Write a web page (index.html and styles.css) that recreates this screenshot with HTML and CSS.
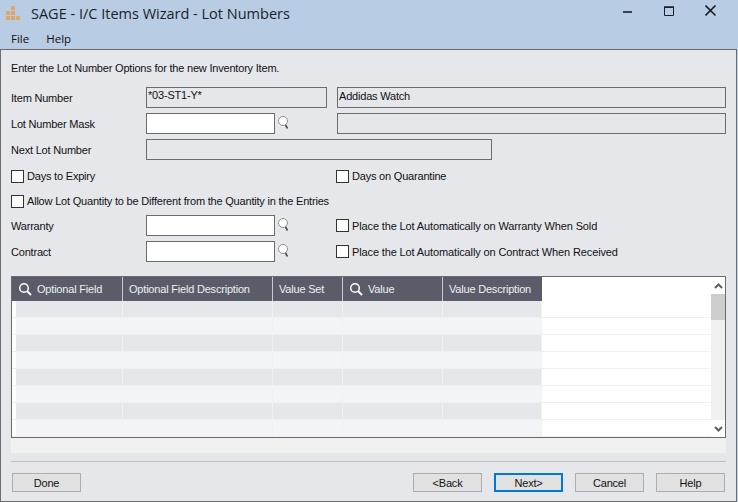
FILE: index.html
```html
<!DOCTYPE html>
<html lang="en">

<head>
    <meta charset="UTF-8">
    <title>SAGE - I/C Items Wizard - Lot Numbers</title>
    <link rel="stylesheet" href="styles.css">
</head>

<body>
    <div class="titulo">
        <svg class="logo" width="15" height="15" viewBox="0 0 15 15">
            <rect x="5" y="1" width="4" height="4" fill="#dfa96c" />
            <rect x="0" y="6" width="4" height="4" fill="#dfa96c" />
            <rect x="5" y="6" width="4" height="4" fill="#dca566" />
            <rect x="0" y="11" width="4" height="4" fill="#dca566" />
            <rect x="5" y="11" width="4" height="4" fill="#dca566" />
            <rect x="10" y="11" width="4" height="4" fill="#dfa96c" />
        </svg>
        <span class="titulo-texto">SAGE - I/C Items Wizard - Lot Numbers</span>
        <div class="controles">
            <svg width="12" height="12" viewBox="0 0 12 12"><path d="M-1 7h10" stroke="#1a1f28" stroke-width="1.600" /></svg>
            <svg width="12" height="12" viewBox="0 0 12 12"><path d="M.5 2.500v8h9v-8z" fill="none" stroke="#1a1f28" /><path d="M0 2h10" stroke="#1a1f28" stroke-width="1.500" /></svg>
            <svg width="12" height="12" viewBox="0 0 12 12"><path d="M.5 .5l10 10M10.500 .5l-10 10" stroke="#1a1f28" stroke-width="1.600" /></svg>
        </div>
    </div>

    <div class="menu">
        <span>File</span>
        <span>Help</span>
    </div>

    <div class="janela">
        <p class="instrucao">Enter the Lot Number Options for the new Inventory Item.</p>

        <div class="linha">
            <label class="rotulo">Item Number</label>
            <div class="campo leitura curto">*03-ST1-Y*</div>
            <div class="campo leitura longo">Addidas Watch</div>
        </div>

        <div class="linha">
            <label class="rotulo">Lot Number Mask</label>
            <div class="campo branco"></div>
            <svg class="lupa" width="14" height="16" viewBox="0 0 14 16"><circle cx="6" cy="7" r="4.500" fill="#fff" stroke="#8f8f8f" /><path d="M8.500 11l2 3.500" stroke="#4a4a4a" stroke-width="1.600" /></svg>
            <div class="campo leitura longo recuo"></div>
        </div>

        <div class="linha">
            <label class="rotulo">Next Lot Number</label>
            <div class="campo leitura medio"></div>
        </div>

        <div class="linha-check primeira">
            <label class="check coluna-esq"><i></i>Days to Expiry</label>
            <label class="check"><i></i>Days on Quarantine</label>
        </div>

        <div class="linha-check segunda">
            <label class="check"><i></i>Allow Lot Quantity to be Different from the Quantity in the Entries</label>
        </div>

        <div class="linha terceira">
            <label class="rotulo">Warranty</label>
            <div class="campo branco"></div>
            <svg class="lupa" width="14" height="16" viewBox="0 0 14 16"><circle cx="6" cy="7" r="4.500" fill="#fff" stroke="#8f8f8f" /><path d="M8.500 11l2 3.500" stroke="#4a4a4a" stroke-width="1.600" /></svg>
            <label class="check"><i></i>Place the Lot Automatically on Warranty When Sold</label>
        </div>

        <div class="linha">
            <label class="rotulo">Contract</label>
            <div class="campo branco"></div>
            <svg class="lupa" width="14" height="16" viewBox="0 0 14 16"><circle cx="6" cy="7" r="4.500" fill="#fff" stroke="#8f8f8f" /><path d="M8.500 11l2 3.500" stroke="#4a4a4a" stroke-width="1.600" /></svg>
            <label class="check"><i></i>Place the Lot Automatically on Contract When Received</label>
        </div>

        <div class="tabela">
            <div class="tabela-corpo">
                <div class="cabecalho">
                    <div class="col col1">
                        <svg width="14" height="14" viewBox="0 0 14 14"><circle cx="6" cy="6" r="4.300" fill="none" stroke="#fff" stroke-width="1.500" /><path d="M9 9l4 4" stroke="#fff" stroke-width="2" /></svg>
                        Optional Field
                    </div>
                    <div class="col col2">Optional Field Description</div>
                    <div class="col col3">Value Set</div>
                    <div class="col col4">
                        <svg width="14" height="14" viewBox="0 0 14 14"><circle cx="6" cy="6" r="4.300" fill="none" stroke="#fff" stroke-width="1.500" /><path d="M9 9l4 4" stroke="#fff" stroke-width="2" /></svg>
                        Value
                    </div>
                    <div class="col col5">Value Description</div>
                </div>
                <div class="registro escuro"><div class="col1"></div><div class="col2"></div><div class="col3"></div><div class="col4"></div><div class="col5"></div></div>
                <div class="registro"><div class="col1"></div><div class="col2"></div><div class="col3"></div><div class="col4"></div><div class="col5"></div></div>
                <div class="registro escuro"><div class="col1"></div><div class="col2"></div><div class="col3"></div><div class="col4"></div><div class="col5"></div></div>
                <div class="registro"><div class="col1"></div><div class="col2"></div><div class="col3"></div><div class="col4"></div><div class="col5"></div></div>
                <div class="registro escuro"><div class="col1"></div><div class="col2"></div><div class="col3"></div><div class="col4"></div><div class="col5"></div></div>
                <div class="registro"><div class="col1"></div><div class="col2"></div><div class="col3"></div><div class="col4"></div><div class="col5"></div></div>
                <div class="registro escuro"><div class="col1"></div><div class="col2"></div><div class="col3"></div><div class="col4"></div><div class="col5"></div></div>
                <div class="registro"><div class="col1"></div><div class="col2"></div><div class="col3"></div><div class="col4"></div><div class="col5"></div></div>
            </div>
            <div class="rolagem">
                <svg width="14" height="17" viewBox="0 0 14 17"><path d="M4 11l3.500-3.500L11 11" fill="none" stroke="#606060" stroke-width="2" /></svg>
                <div class="polegar"></div>
                <div class="trilho"></div>
                <svg width="14" height="17" viewBox="0 0 14 17"><path d="M4 7l3.500 3.500L11 7" fill="none" stroke="#606060" stroke-width="2" /></svg>
            </div>
        </div>
        <div class="faixa"></div>
        <hr class="separador">

        <div class="botoes">
            <button>Done</button>
            <div class="botoes-dir">
                <button>&lt;Back</button>
                <button class="ativo">Next&gt;</button>
                <button>Cancel</button>
                <button>Help</button>
            </div>
        </div>
    </div>
</body>

</html>
```

FILE: styles.css
```css
html, body {
    margin: 0;
    height: 502px;
    overflow: hidden;
}

body {
    width: 738px;
    background: #b8cce4;
    font-family: "Liberation Sans", sans-serif;
    font-size: 11px;
    letter-spacing: -0.2px;
    color: #111;
}

.titulo {
    height: 28px;
    display: flex;
    align-items: center;
    padding-left: 6px;
    letter-spacing: normal;
}

.logo {
    align-self: flex-start;
    margin: 5px 10px 0 0;
}

.titulo-texto {
    font-family: "Open Sans", sans-serif;
    font-size: 14.500px;
    color: #1a1f28;
    padding-bottom: 2px;
}

.controles {
    align-self: flex-start;
    display: flex;
    gap: 29px;
    margin: 5px 21px 0 auto;
}

.menu {
    height: 21px;
    display: flex;
    gap: 17px;
    padding-left: 11px;
    font-family: "Open Sans", sans-serif;
    font-size: 11.500px;
    letter-spacing: normal;
    line-height: 21px;
}

.janela {
    width: 737px;
    height: 453px;
    box-sizing: border-box;
    background: #e6e7eb;
    border: 1px solid #6d6d6d;
    padding: 0 10px;
}

.instrucao {
    margin: 0;
    height: 37px;
    padding-top: 12px;
    box-sizing: border-box;
}

.linha {
    display: flex;
    align-items: center;
    height: 21px;
    margin-bottom: 5px;
}

.linha .check {
    letter-spacing: -0.13px;
}

.rotulo {
    width: 135px;
    flex: none;
    padding-top: 1px;
}

.campo {
    height: 21px;
    box-sizing: border-box;
    border: 1px solid #6b6b6b;
    padding: 2px 1px;
    flex: none;
}

.leitura {
    background: #e6e7eb;
}

.branco {
    width: 129px;
    background: #fff;
}

.curto {
    width: 181px;
    margin-right: 10px;
    padding-top: 1px;
}

.longo {
    width: 389px;
}

.recuo {
    margin-left: 1px;
}

.medio {
    width: 346px;
}

.lupa {
    flex: none;
    margin: 0 45px 3px 2px;
}

.check {
    display: flex;
    align-items: center;
}

.check i {
    width: 11px;
    height: 11px;
    border: 1px solid #333;
    background: #fff;
    margin-right: 3px;
    flex: none;
}

.linha-check {
    display: flex;
    height: 14px;
}

.primeira {
    margin-top: 9px;
}

.segunda {
    margin-top: 11px;
}

.terceira {
    margin-top: 7px;
}

.coluna-esq {
    width: 325px;
    flex: none;
}

.tabela {
    display: flex;
    height: 162px;
    width: 715px;
    box-sizing: border-box;
    margin-top: 14px;
    border: 1px solid #6b6b6b;
    background: #fff;
}

.tabela-corpo {
    flex: 1;
    overflow: hidden;
}

.cabecalho,
.registro {
    display: flex;
}

.cabecalho {
    height: 24px;
    width: 530px;
    background: #5a5d69;
    color: #eef0f4;
    white-space: nowrap;
}

.col {
    display: flex;
    align-items: center;
    gap: 5px;
    padding-left: 6px;
    box-sizing: border-box;
    border-right: 1px solid #c9cbd1;
}

.col1 { width: 111px; }
.col2 { width: 150px; }
.col3 { width: 70px; }
.col4 { width: 100px; }
.col5 { width: 99px; border-right: 0; }

.registro {
    height: 17px;
    box-sizing: border-box;
    border-bottom: 1px solid #f0f0f0;
    padding-left: 4px;
}

.registro > div {
    box-sizing: border-box;
    border-right: 1px solid #f0f1f3;
    background: #f3f4f8;
}

.registro > .col1 { width: 107px; }

.registro.escuro > div {
    background: #e6e7ea;
}

.rolagem {
    width: 14px;
    flex: none;
    display: flex;
    flex-direction: column;
    background: #f0f0f0;
}

.rolagem svg {
    background: #fff;
    flex: none;
}

.polegar {
    height: 26px;
    background: #cdcdcd;
}

.trilho {
    flex: 1;
}

.faixa {
    width: 715px;
    height: 15px;
    background: #f0f0f0;
}

.separador {
    width: 715px;
    height: 1px;
    margin: 8px 0 11px;
    border: 0;
    background: #bfc0c4;
}

.botoes {
    display: flex;
    justify-content: space-between;
    width: 714px;
    padding-left: 1px;
    box-sizing: border-box;
}

.botoes-dir {
    display: flex;
    gap: 12px;
}

button {
    width: 69px;
    height: 19px;
    padding: 0;
    border: 1px solid #adadad;
    background: #e1e1e1;
    font: inherit;
    letter-spacing: inherit;
    color: #111;
}

.ativo {
    border: 2px solid #0078d7;
}
```
